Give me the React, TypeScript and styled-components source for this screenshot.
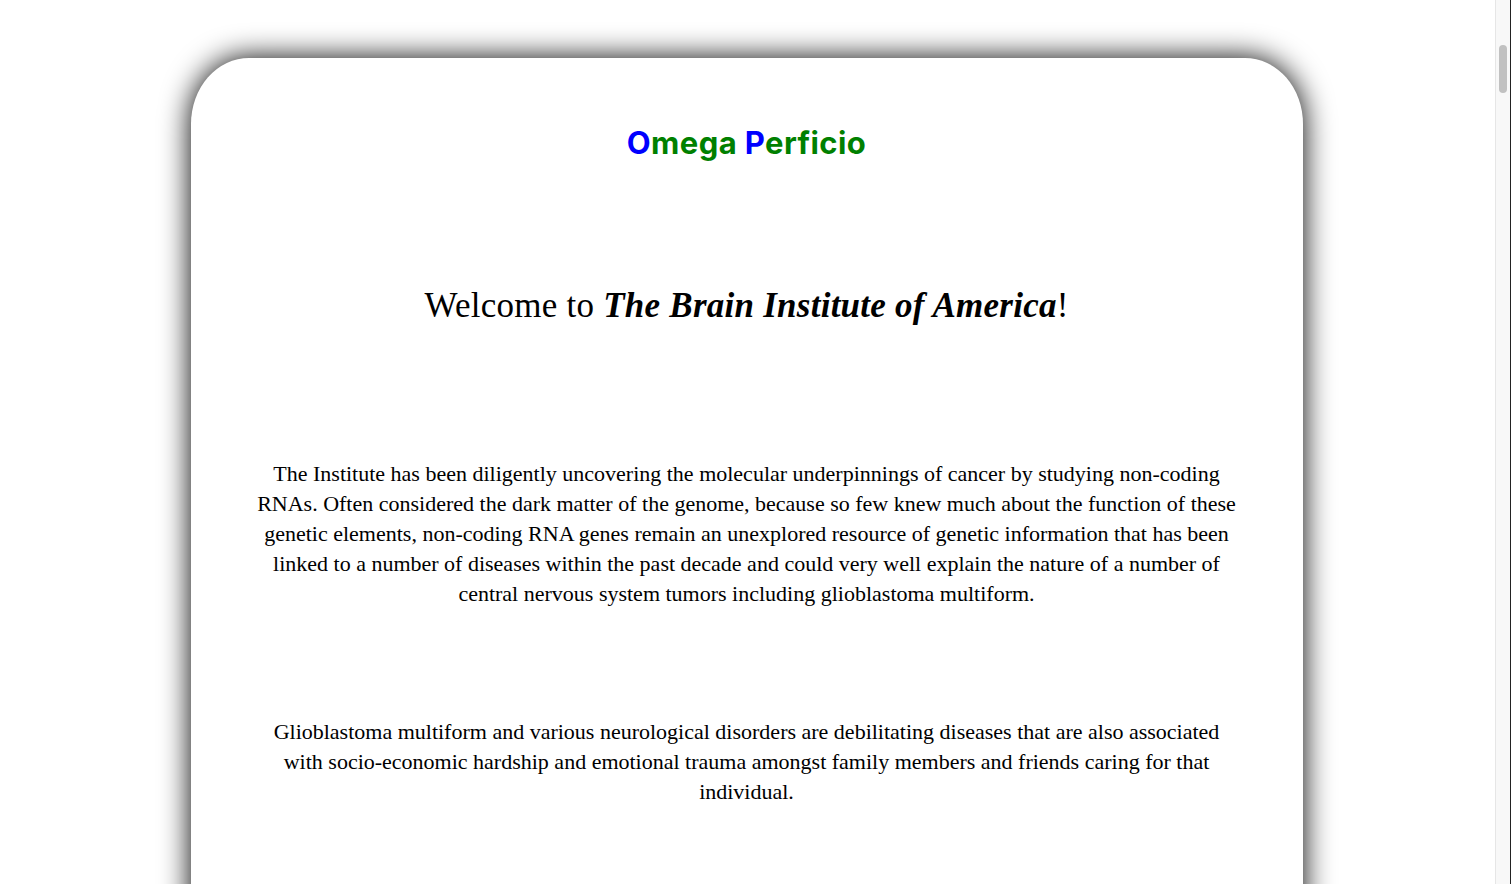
import React from "react";
import styled, { createGlobalStyle } from "styled-components";

const GlobalStyle = createGlobalStyle`
  html, body {
    margin: 0;
    padding: 0;
    background: #ffffff;
  }
  body {
    padding: 8px 26px 8px 8px;
    font-family: "Liberation Serif", "DejaVu Serif", serif;
  }
`;

const Page = styled.main`
  display: flex;
  justify-content: center;
  padding-top: 50px;
`;

const Card = styled.section`
  width: 1112px;
  min-height: 15000px;
  box-sizing: border-box;
  background: #ffffff;
  border-radius: 58px 58px 0 0 / 66px 66px 0 0;
  box-shadow: 0 0 30px rgba(0, 0, 0, 1);
  padding: 67px 64px 40px;
  display: flex;
  flex-direction: column;
  align-items: center;
`;

const Logo = styled.div`
  font-family: "Inter", "Roboto", sans-serif;
  font-weight: 700;
  font-size: 31px;
  line-height: 36px;
  letter-spacing: 0.4px;
  color: #008000;
`;

const Initial = styled.span`
  color: #0000ff;
`;

const Heading = styled.h1`
  margin: 124px 0 0;
  font-family: "Liberation Serif", serif;
  font-weight: 400;
  font-size: 35px;
  line-height: 42px;
  color: #000;
  text-align: center;
  letter-spacing: 0.25px;

  em {
    font-style: italic;
    font-weight: 700;
  }
`;

const Paragraph = styled.p<{ $gap: number }>`
  margin: ${(p) => p.$gap}px 0 0;
  font-family: "Liberation Serif", serif;
  font-size: 22px;
  line-height: 30px;
  color: #000;
  text-align: center;
  white-space: nowrap;
`;

const ScrollRail = styled.div`
  position: fixed;
  top: 0;
  right: 0;
  bottom: 0;
  width: 14px;
  background: #f8f8f8;
  border-left: 1px solid #e6e6e6;
  border-right: 1px solid #222222;
`;

const ScrollThumb = styled.div`
  position: absolute;
  top: 45px;
  left: 3px;
  width: 8px;
  height: 48px;
  border-radius: 4px;
  background: #c1c1c1;
`;

export default function App() {
  return (
    <>
      <GlobalStyle />
      <Page>
        <Card>
          <Logo>
            <Initial>O</Initial>mega <Initial>P</Initial>erficio
          </Logo>
          <Heading>
            Welcome to <em>The Brain Institute of America</em>!
          </Heading>
          <Paragraph $gap={132}>
            The Institute has been diligently uncovering the molecular underpinnings of cancer by studying non-coding
            <br />
            RNAs. Often considered the dark matter of the genome, because so few knew much about the function of these
            <br />
            genetic elements, non-coding RNA genes remain an unexplored resource of genetic information that has been
            <br />
            linked to a number of diseases within the past decade and could very well explain the nature of a number of
            <br />
            central nervous system tumors including glioblastoma multiform.
          </Paragraph>
          <Paragraph $gap={108}>
            Glioblastoma multiform and various neurological disorders are debilitating diseases that are also associated
            <br />
            with socio-economic hardship and emotional trauma amongst family members and friends caring for that
            <br />
            individual.
          </Paragraph>
        </Card>
      </Page>
      <ScrollRail>
        <ScrollThumb />
      </ScrollRail>
    </>
  );
}
